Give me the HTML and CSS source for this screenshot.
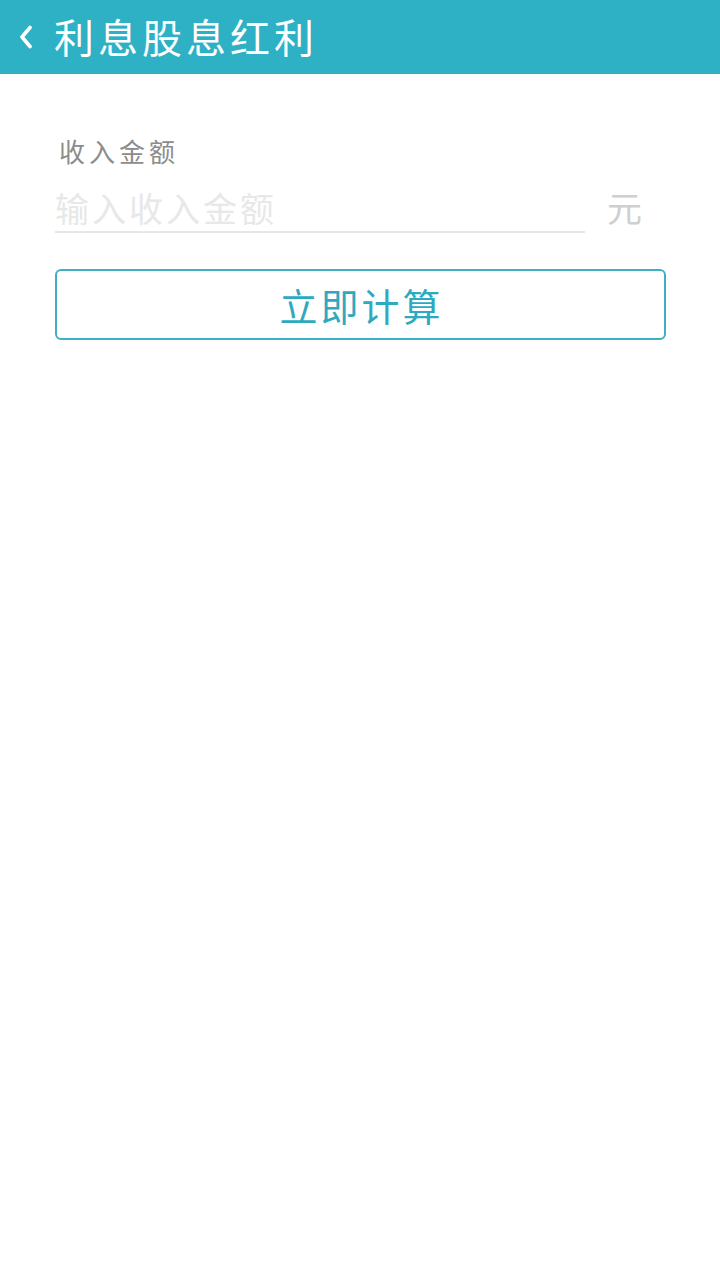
FILE: index.html
```html
<!DOCTYPE html>
<html lang="zh">
<head>
<meta charset="utf-8">
<link rel="stylesheet" href="styles.css">
</head>
<body>
<header class="bar">
  <svg class="back" width="14" height="24" viewBox="0 0 14 24"><path d="M11 2.5 L3 12 L11 21.5" fill="none" stroke="#fff" stroke-width="3.6" stroke-linecap="round" stroke-linejoin="round"/></svg>
  <h1 class="title">利息股息红利</h1>
</header>
<main class="content">
  <div class="label">收入金额</div>
  <div class="field-row">
    <div class="field"><span class="placeholder">输入收入金额</span></div>
    <span class="unit">元</span>
  </div>
  <button class="calc">立即计算</button>
</main>
</body>
</html>
```
FILE: styles.css
```css
html, body {
  margin: 0;
  padding: 0;
  background: #fff;
  width: 720px;
  height: 1280px;
  font-family: "Noto Sans CJK SC", "Noto Sans", sans-serif;
}
.bar {
  height: 74px;
  background: #2eb0c5;
  display: flex;
  align-items: center;
  padding-left: 19px;
  box-sizing: border-box;
}
.back {
  display: block;
  margin-right: 21px;
  margin-top: -1px;
}
.title {
  margin: 0;
  color: #fff;
  font-size: 40px;
  font-weight: 400;
  letter-spacing: 4px;
  line-height: 1;
  margin-top: -3px;
}
.content {
  padding: 0 54px 0 55px;
}
.label {
  margin-top: 61px;
  margin-left: 4px;
  font-size: 26px;
  letter-spacing: 4px;
  line-height: 32px;
  color: #8c8c8c;
}
.field-row {
  display: flex;
  align-items: flex-end;
  margin-top: 10px;
}
.field {
  width: 530px;
  border-bottom: 2px solid #e6e6e6;
  height: 56px;
  box-sizing: border-box;
  display: flex;
  align-items: flex-end;
  padding-bottom: 6px;
}
.placeholder {
  font-size: 34px;
  letter-spacing: 3px;
  color: #e8e8e8;
  line-height: 1;
  margin-left: 0;
}
.unit {
  margin-left: 22px;
  font-size: 35px;
  color: #cfcfcf;
  line-height: 1;
  margin-bottom: 9px;
}
.calc {
  display: block;
  margin-top: 36px;
  width: 611px;
  height: 71px;
  border: 2px solid #3db0c2;
  border-radius: 6px;
  background: #fff;
  color: #2eaac0;
  font-family: "Noto Sans CJK SC", "Noto Sans", sans-serif;
  font-size: 38px;
  padding: 0 0 0 2px;
  letter-spacing: 3px;
}
```
